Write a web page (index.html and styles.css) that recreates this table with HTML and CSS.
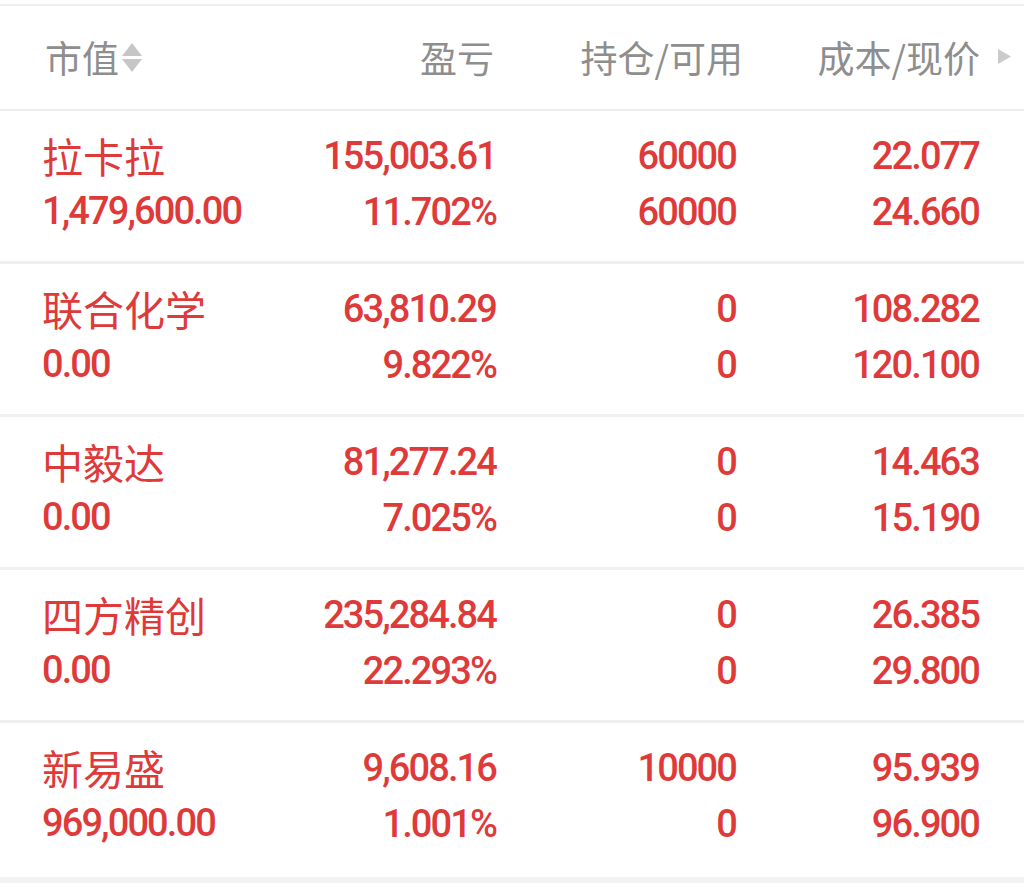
FILE: index.html
```html
<!DOCTYPE html>
<html lang="zh">
<head>
<meta charset="utf-8">
<title>持仓</title>
<link rel="stylesheet" href="styles.css">
</head>
<body>
<div class="page">
  <div class="topline"></div>
  <div class="header grid">
    <div class="hcell first">市值<svg class="sort" width="20" height="30" viewBox="0 0 20 30"><polygon points="10,0 20,13 0,13" fill="#c6c6c6"/><polygon points="0,16 20,16 10,29" fill="#c6c6c6"/></svg></div>
    <div class="hcell c2">盈亏</div>
    <div class="hcell c3">持仓/可用</div>
    <div class="hcell c4">成本/现价<svg class="arrow" width="13" height="15" viewBox="0 0 13 15"><polygon points="0,0 13,7.5 0,15" fill="#cbcbcb"/></svg></div>
  </div>

  <div class="row grid">
    <div class="cell first"><div class="name">拉卡拉</div><div class="num">1,479,600.00</div></div>
    <div class="cell right"><div class="num">155,003.61</div><div class="num">11.702%</div></div>
    <div class="cell right"><div class="num">60000</div><div class="num">60000</div></div>
    <div class="cell right"><div class="num">22.077</div><div class="num">24.660</div></div>
  </div>

  <div class="row grid">
    <div class="cell first"><div class="name">联合化学</div><div class="num">0.00</div></div>
    <div class="cell right"><div class="num">63,810.29</div><div class="num">9.822%</div></div>
    <div class="cell right"><div class="num">0</div><div class="num">0</div></div>
    <div class="cell right"><div class="num">108.282</div><div class="num">120.100</div></div>
  </div>

  <div class="row grid">
    <div class="cell first"><div class="name">中毅达</div><div class="num">0.00</div></div>
    <div class="cell right"><div class="num">81,277.24</div><div class="num">7.025%</div></div>
    <div class="cell right"><div class="num">0</div><div class="num">0</div></div>
    <div class="cell right"><div class="num">14.463</div><div class="num">15.190</div></div>
  </div>

  <div class="row grid">
    <div class="cell first"><div class="name">四方精创</div><div class="num">0.00</div></div>
    <div class="cell right"><div class="num">235,284.84</div><div class="num">22.293%</div></div>
    <div class="cell right"><div class="num">0</div><div class="num">0</div></div>
    <div class="cell right"><div class="num">26.385</div><div class="num">29.800</div></div>
  </div>

  <div class="row grid last">
    <div class="cell first"><div class="name">新易盛</div><div class="num">969,000.00</div></div>
    <div class="cell right"><div class="num">9,608.16</div><div class="num">1.001%</div></div>
    <div class="cell right"><div class="num">10000</div><div class="num">0</div></div>
    <div class="cell right"><div class="num">95.939</div><div class="num">96.900</div></div>
  </div>
  <div class="bottom"></div>
</div>
</body>
</html>
```

FILE: styles.css
```css
html, body {
  margin: 0;
  padding: 0;
  background: #ffffff;
}
.page {
  width: 1024px;
  height: 883px;
  overflow: hidden;
  display: flex;
  flex-direction: column;
  padding-top: 4px;
  box-sizing: border-box;
}
.topline {
  height: 2px;
  background: #efefef;
}
.grid {
  display: grid;
  grid-template-columns: 215px 240px 240px 243px;
  padding: 0 44px 0 42px;
}
.header {
  height: 103px;
  align-items: center;
  border-bottom: 2px solid #ececec;
  font-family: "Noto Sans CJK SC", "Noto Sans", sans-serif;
  font-size: 37px;
  color: #8e8e8e;
}
.hcell {
  display: flex;
  align-items: center;
  justify-content: flex-end;
  line-height: 1;
}
.hcell.first {
  justify-content: flex-start;
  padding-left: 3px;
}
.sort {
  margin-left: 3px;
}
.hcell.c2 {
  padding-right: 3px;
}
.hcell.c3 {
  margin-right: -6px;
}
.hcell.c4 {
  position: relative;
}
.arrow {
  position: absolute;
  right: -31px;
  top: 50%;
  margin-top: -9px;
}
.row {
  height: 150px;
  box-sizing: content-box;
  border-bottom: 3px solid #efefef;
  color: #df3a3a;
}
.row.last {
  height: 154px;
  border-bottom: none;
}
.cell {
  padding-top: 17px;
  display: flex;
  flex-direction: column;
}
.cell.right {
  align-items: flex-end;
}
.name {
  height: 56px;
  line-height: 56px;
  font-family: "Noto Sans CJK SC", "Noto Sans", sans-serif;
  font-size: 41px;
  margin-top: -1px;
}
.num {
  height: 56px;
  line-height: 56px;
  font-family: Roboto, "Liberation Sans", sans-serif;
  font-size: 38px;
  font-weight: 500;
  letter-spacing: -1.9px;
  white-space: nowrap;
}
.cell.right .num {
  margin-right: 1px;
}
.bottom {
  flex: 1;
  background: #f3f3f3;
}
```
